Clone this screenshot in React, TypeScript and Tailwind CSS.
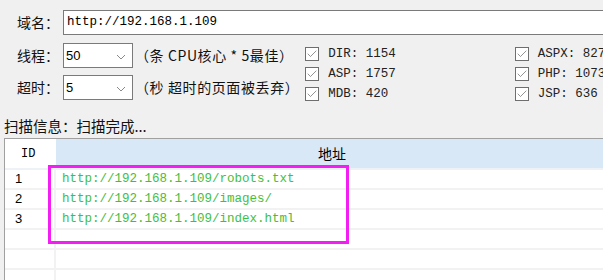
import { Check } from "lucide-react"

const cjk = "font-['Microsoft_YaHei','Noto_Sans_CJK_SC',sans-serif]"
const mono = "font-['Liberation_Mono','Noto_Sans_CJK_SC',monospace]"

function Chevron() {
    return (
        <svg width="10" height="6" viewBox="0 0 10 6" className="mt-[3px]">
            <path d="M1 1 L5 5 L9 1" fill="none" stroke="#8a8a8a" strokeWidth="1" />
        </svg>
    )
}

function Select(props: { value: string }) {
    return (
        <div className="w-[70px] h-[25px] shrink-0 bg-white border border-[#7a7a7a] flex items-center justify-between pl-[2px] pr-[6px]">
            <span className="text-[13px] text-black font-['Liberation_Sans',sans-serif]">{props.value}</span>
            <Chevron />
        </div>
    )
}

function CheckItem(props: { label: string }) {
    return (
        <div className="h-[20px] flex items-center gap-[9px]">
            <div className="w-[14px] h-[14px] shrink-0 border border-[#6e6e6e] bg-white flex items-center justify-center">
                <Check size={12} strokeWidth={1.4} color="#666" />
            </div>
            <span className={`${mono} text-[12.5px] text-[#222] whitespace-nowrap`}>{props.label}</span>
        </div>
    )
}

const rows = [
    "http://192.168.1.109/robots.txt",
    "http://192.168.1.109/images/",
    "http://192.168.1.109/index.html",
    "",
    "",
    "",
]

export default function App() {
    return (
        <div className={`w-[603px] h-[280px] bg-[#f0f0f0] overflow-hidden relative ${cjk}`}>
            {/* domain */}
            <div className="flex items-center pt-[10px] pl-[17px]">
                <span className="text-[14px] w-[46px] shrink-0 whitespace-nowrap text-[#111]">域名：</span>
                <div className="h-[25px] w-[560px] shrink-0 bg-white border border-[#7a7a7a] flex items-center pl-[3px]">
                    <span className={`${mono} text-[12.5px] text-black`}>http://192.168.1.109</span>
                </div>
            </div>

            {/* options */}
            <div className="flex mt-[8px]">
                <div className="flex flex-col gap-[7px] pl-[17px]">
                    <div className="flex items-center">
                        <span className="text-[14px] w-[46px] shrink-0 text-[#111]">线程：</span>
                        <Select value="50" />
                        <span className="text-[14px] tracking-[0.6px] ml-[2px] text-[#111] whitespace-nowrap">（条 CPU核心 * 5最佳）</span>
                    </div>
                    <div className="flex items-center">
                        <span className="text-[14px] w-[46px] shrink-0 text-[#111]">超时：</span>
                        <Select value="5" />
                        <span className="text-[14px] tracking-[0.6px] ml-[2px] text-[#111] whitespace-nowrap">（秒 超时的页面被丢弃）</span>
                    </div>
                </div>
                <div className="flex flex-col ml-[6px] pt-[1px]">
                    <CheckItem label="DIR: 1154" />
                    <CheckItem label="ASP: 1757" />
                    <CheckItem label="MDB: 420" />
                </div>
                <div className="flex flex-col ml-[119px] pt-[1px]">
                    <CheckItem label="ASPX: 827" />
                    <CheckItem label="PHP: 1073" />
                    <CheckItem label="JSP: 636" />
                </div>
            </div>

            {/* status */}
            <div className="mt-[10px] pl-[4px] h-[24px] flex items-center text-[14.5px] text-[#111]">扫描信息：扫描完成...</div>

            {/* table */}
            <div className="ml-[4px] border-l border-t border-[#a0a0a0] bg-white">
                <div className="flex h-[31px] border-b-2 border-[#eef2f6]">
                    <div className={`w-[51px] flex items-center pl-[16px] ${mono} text-[12px] text-black`}>ID</div>
                    <div className="flex-1 bg-[#d9e8f6] flex items-center pl-[262px] text-[14px] text-black">地址</div>
                </div>
                {rows.map((r, i) => (
                    <div key={i} className="flex h-[20px] border-b-2 border-[#f2f2f2]">
                        <div className="w-[51px] border-r-2 border-[#f2f2f2] flex items-center pl-[10px] text-[13px] text-black font-['Liberation_Sans',sans-serif]">
                            {r ? i + 1 : ""}
                        </div>
                        <div className={`flex-1 flex items-center pl-[6px] ${mono} text-[12.5px] text-[#3fc03f]`}>{r}</div>
                    </div>
                ))}
            </div>

            {/* highlight */}
            <div className="absolute left-[48px] top-[165px] w-[301px] h-[79px] border-[3px] border-[#f21ef2]" />
        </div>
    )
}
